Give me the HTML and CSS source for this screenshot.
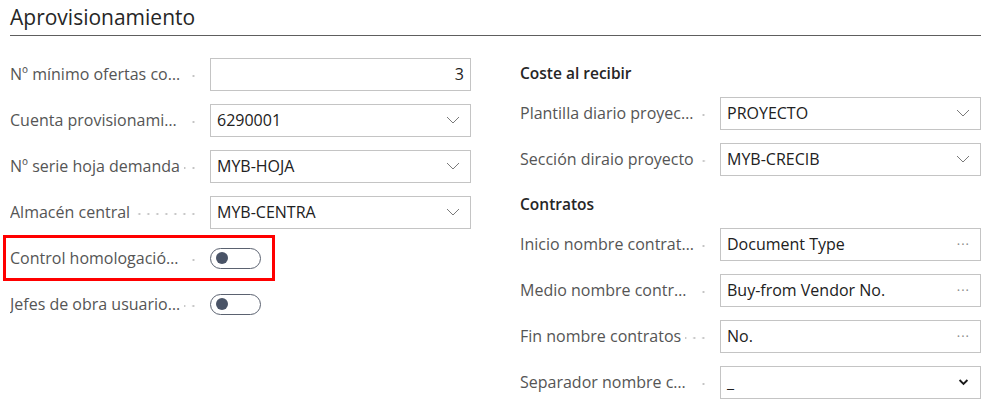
FILE: index.html
```html
<!DOCTYPE html>
<html lang="es">
<head>
  <meta charset="UTF-8">
  <meta name="viewport" content="width=device-width, initial-scale=1.0">
  <title>Aprovisionamiento</title>
  <link rel="stylesheet" href="styles.css">
</head>
<body>
  <section class="group">
    <h2 class="group-title">Aprovisionamiento</h2>

    <div class="columns">
      <!-- columna izquierda -->
      <div class="col">
        <div class="field">
          <label class="caption"><span class="text">Nº mínimo ofertas comparativo</span><span class="leader"></span></label>
          <div class="box num">3</div>
        </div>
        <div class="field">
          <label class="caption"><span class="text">Cuenta provisionamiento</span><span class="leader"></span></label>
          <div class="box"><span class="value">6290001</span><svg class="chev" viewBox="0 0 14 8"><path d="M1 1 L7 7 L13 1" /></svg></div>
        </div>
        <div class="field">
          <label class="caption"><span class="text">Nº serie hoja demanda</span><span class="leader"></span></label>
          <div class="box"><span class="value">MYB-HOJA</span><svg class="chev" viewBox="0 0 14 8"><path d="M1 1 L7 7 L13 1" /></svg></div>
        </div>
        <div class="field">
          <label class="caption"><span class="text">Almacén central</span><span class="leader"></span></label>
          <div class="box"><span class="value">MYB-CENTRA</span><svg class="chev" viewBox="0 0 14 8"><path d="M1 1 L7 7 L13 1" /></svg></div>
        </div>
        <div class="field marked">
          <label class="caption"><span class="text">Control homologación proveedores</span><span class="leader"></span></label>
          <div class="toggle"><span class="knob"></span></div>
        </div>
        <div class="field">
          <label class="caption" title="Jefes de obra usuarios"><span class="text">Jefes de obra usuario…</span><span class="leader"></span></label>
          <div class="toggle"><span class="knob"></span></div>
        </div>
      </div>

      <!-- columna derecha -->
      <div class="col">
        <h3 class="sub">Coste al recibir</h3>
        <div class="field">
          <label class="caption"><span class="text">Plantilla diario proyecto</span><span class="leader"></span></label>
          <div class="box"><span class="value">PROYECTO</span><svg class="chev" viewBox="0 0 14 8"><path d="M1 1 L7 7 L13 1" /></svg></div>
        </div>
        <div class="field">
          <label class="caption"><span class="text">Sección diraio proyecto</span><span class="leader"></span></label>
          <div class="box"><span class="value">MYB-CRECIB</span><svg class="chev" viewBox="0 0 14 8"><path d="M1 1 L7 7 L13 1" /></svg></div>
        </div>

        <h3 class="sub">Contratos</h3>
        <div class="field">
          <label class="caption"><span class="text">Inicio nombre contratos</span><span class="leader"></span></label>
          <div class="box"><span class="value">Document Type</span><span class="more">···</span></div>
        </div>
        <div class="field">
          <label class="caption"><span class="text">Medio nombre contratos</span><span class="leader"></span></label>
          <div class="box"><span class="value">Buy-from Vendor No.</span><span class="more">···</span></div>
        </div>
        <div class="field">
          <label class="caption"><span class="text">Fin nombre contratos</span><span class="leader"></span></label>
          <div class="box"><span class="value">No.</span><span class="more">···</span></div>
        </div>
        <div class="field">
          <label class="caption"><span class="text">Separador nombre contratos</span><span class="leader"></span></label>
          <div class="box"><span class="value">_</span><svg class="chev bold" viewBox="0 0 14 8"><path d="M2 1.5 L7 6.5 L12 1.5" /></svg></div>
        </div>
      </div>
    </div>
  </section>
</body>
</html>
```

FILE: styles.css
```css
body {
  margin: 0;
  background: #fff;
  font-family: "Open Sans", "Noto Sans", sans-serif;
  color: #212121;
}

.group {
  padding: 0 9px 0 10px;
}

.group-title {
  margin: 0;
  padding-top: 3px;
  padding-bottom: 4px;
  font-size: 21px;
  font-weight: 400;
  line-height: 28px;
  color: #262626;
  border-bottom: 1px solid #5e5e5e;
}

.columns {
  display: flex;
  gap: 49px;
  padding-top: 15px;
}

.col {
  flex: 1;
  display: flex;
  flex-direction: column;
}

.sub {
  margin: 0;
  height: 39px;
  box-sizing: border-box;
  padding-top: 11px;
  font-size: 15.5px;
  font-weight: 600;
  line-height: 22px;
  color: #262626;
}

.field {
  position: relative;
  display: flex;
  align-items: center;
  height: 46px;
}

.caption {
  width: 200px;
  flex: none;
  display: flex;
  align-items: center;
  font-size: 16px;
  color: #555;
  white-space: nowrap;
}

.caption .text {
  max-width: 174px;
  overflow: hidden;
  text-overflow: ellipsis;
}

.leader {
  flex: 1;
  min-width: 9px;
  height: 4px;
  margin: 4px 12px 0 4px;
  background: radial-gradient(circle, #c4c4c4 0.9px, transparent 1.3px) right center / 9px 4px repeat-x;
}

.box {
  flex: 1;
  height: 33px;
  box-sizing: border-box;
  border: 1px solid #c4c4c4;
  display: flex;
  align-items: center;
  padding: 0 10px 0 6px;
  font-size: 16px;
  color: #212121;
}

.box .value {
  flex: 1;
}

.box.num {
  justify-content: flex-end;
  padding-right: 6px;
}

.chev {
  width: 14px;
  height: 8px;
  fill: none;
  stroke: #7a7a7a;
  stroke-width: 1;
}

.chev.bold {
  width: 11px;
  stroke: #1a1a1a;
  stroke-width: 2.4;
  margin-right: 1px;
}

.more {
  color: #8a8a8a;
  font-size: 13px;
  letter-spacing: 1px;
}

.toggle {
  width: 51px;
  height: 21px;
  box-sizing: border-box;
  border: 1px solid #5b6270;
  border-radius: 11px;
  display: flex;
  align-items: center;
  padding-left: 5px;
}

.knob {
  width: 12px;
  height: 12px;
  border-radius: 50%;
  background: #4a5467;
}

.marked::after {
  content: "";
  position: absolute;
  left: -7px;
  top: 0;
  width: 272px;
  height: 46px;
  box-sizing: border-box;
  border: 3px solid #ff0000;
}
```
